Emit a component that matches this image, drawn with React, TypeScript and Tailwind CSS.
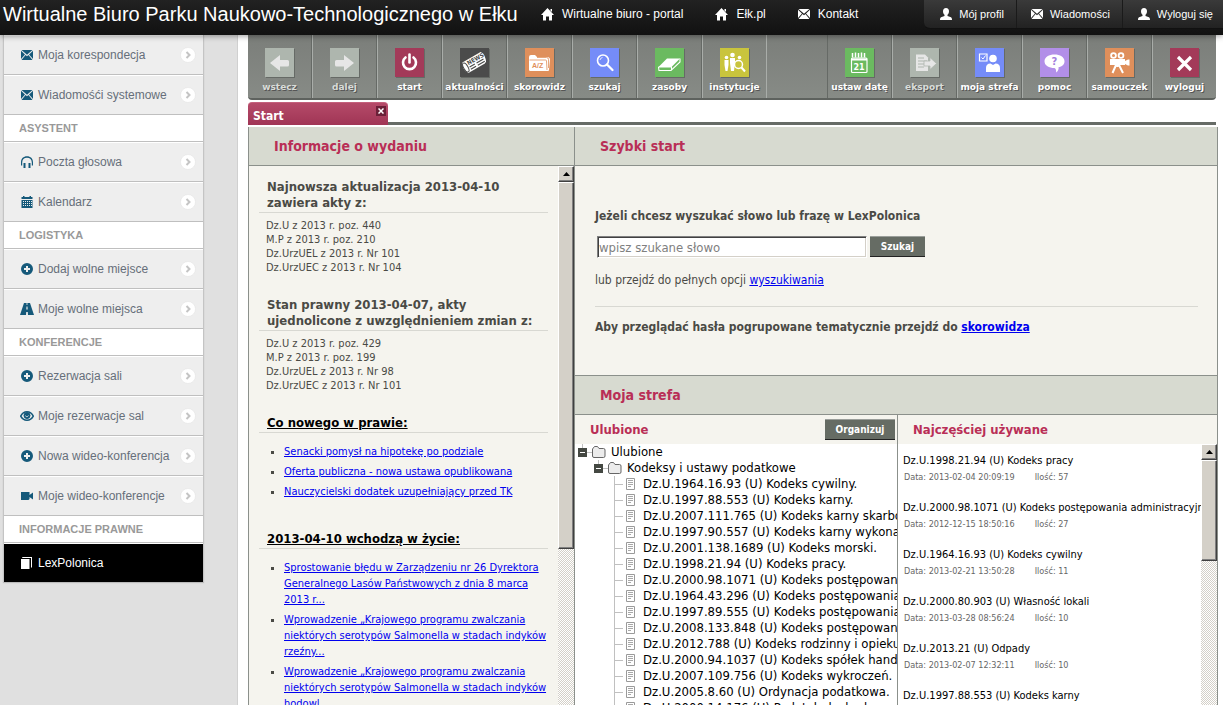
import type { ReactNode } from "react";

type IconProps = { className?: string };

function HomeIcon({ className }: IconProps) {
  return (
    <svg viewBox="0 0 13 13" className={className} fill="currentColor">
      <path d="M6.500 0 13 7H11V12.500H8V8.500H5V12.500H2V7H0L6.500 0Z" />
      <path d="M9.500 1H11V4L9.500 2.500Z" />
    </svg>
  );
}

function MailIcon({ className }: IconProps) {
  return (
    <svg viewBox="0 0 12 10" className={className} fill="currentColor">
      <path d="M.5 0H11.500L6 4.800Z" />
      <path d="M0 .8 4 4.500 0 9Z" />
      <path d="M12 .8 8 4.500 12 9Z" />
      <path d="M4.600 5.100 6 6.300 7.400 5.100 11.500 10H.5Z" />
    </svg>
  );
}

function UserIcon({ className }: IconProps) {
  return (
    <svg viewBox="0 0 12 12" className={className} fill="currentColor">
      <path d="M6 0C8 0 9 1.400 9 3.200C9 4.900 8.200 6 7.500 6.700V8L11 9.300C11.700 9.700 12 10.500 12 12H0C0 10.500.3 9.700 1 9.300L4.500 8V6.700C3.800 6 3 4.900 3 3.200C3 1.400 4 0 6 0Z" />
    </svg>
  );
}

function HeadphonesIcon({ className }: IconProps) {
  return (
    <svg viewBox="0 0 12 12" className={className} fill="currentColor">
      <path d="M0 9.500V6.500C0 2.500 2.500 .3 6 .3S12 2.500 12 6.500V9.500H10.800V6.500C10.800 3.400 9 1.700 6 1.700S1.200 3.400 1.200 6.500V9.500Z" />
      <path d="M2.500 7H4.500V12H2.500ZM7.500 7H9.500V12H7.500Z" />
    </svg>
  );
}

function CalendarIcon({ className }: IconProps) {
  return (
    <svg viewBox="0 0 12 12" className={className} fill="currentColor">
      <path d="M.5 1H2V0H3.500V1H8.500V0H10V1H11.500V3H.5Z" />
      <path
        fillRule="evenodd"
        d="M.5 4H11.500V12H.5ZM2 5V6H3V5ZM4 5V6H5V5ZM6 5V6H7V5ZM8 5V6H9V5ZM10 5V6H11V5ZM2 7V8H3V7ZM4 7V8H5V7ZM6 7V8H7V7ZM8 7V8H9V7ZM10 7V8H11V7ZM2 9V10H3V9ZM4 9V10H5V9ZM6 9V10H7V9ZM8 9V10H9V9ZM10 9V10H11V9Z"
      />
    </svg>
  );
}

function PlusIcon({ className }: IconProps) {
  return (
    <svg viewBox="0 0 12 12" className={className} fill="currentColor">
      <path
        fillRule="evenodd"
        d="M6 0A6 6 0 1 1 6 12A6 6 0 1 1 6 0ZM5 3V5H3V7H5V9H7V7H9V5H7V3Z"
      />
    </svg>
  );
}

function RoadIcon({ className }: IconProps) {
  return (
    <svg viewBox="0 0 14 12" className={className} fill="currentColor">
      <path
        fillRule="evenodd"
        d="M4 0H10L14 12H8L7.800 9H6.200L6 12H0ZM6.600 0V2H7.400V0ZM6.500 3.500 6.300 6.500H7.700L7.500 3.500Z"
      />
    </svg>
  );
}

function EyeIcon({ className }: IconProps) {
  return (
    <svg viewBox="0 0 14 10" className={className} fill="none" stroke="currentColor">
      <path d="M.7 5.200C3.500-.6 10.500-.6 13.300 5.200C10.500 10.600 3.500 10.600.7 5.200Z" strokeWidth="1.500" />
      <circle cx="7" cy="4.500" r="3" fill="currentColor" />
      <path d="M5.500 4.500C5.500 6 8 6 8.500 4.500" stroke="#eee" strokeWidth=".8" />
    </svg>
  );
}

function VideoIcon({ className }: IconProps) {
  return (
    <svg viewBox="0 0 12 8" className={className} fill="currentColor">
      <path d="M0 0H8.500V3L12 .5V7.500L8.500 5V7L7.500 8H0Z" />
    </svg>
  );
}

function BookIcon({ className }: IconProps) {
  return (
    <svg viewBox="0 0 11 12" className={className} fill="currentColor">
      <path d="M0 2H8.500V12H0Z" />
      <path d="M1.500 0H11V10.500H10V1H1Z" />
    </svg>
  );
}

type MenuItem = { label: string; icon: ReactNode; active?: boolean };

const iconSize = "h-3 w-3";

const menu: { title?: string; items: MenuItem[] }[] = [
  {
    items: [
      { label: "Moja korespondecja", icon: <MailIcon className="h-[10px] w-3" /> },
      { label: "Wiadomośći systemowe", icon: <MailIcon className="h-[10px] w-3" /> },
    ],
  },
  {
    title: "ASYSTENT",
    items: [
      { label: "Poczta głosowa", icon: <HeadphonesIcon className={iconSize} /> },
      { label: "Kalendarz", icon: <CalendarIcon className={iconSize} /> },
    ],
  },
  {
    title: "LOGISTYKA",
    items: [
      { label: "Dodaj wolne miejsce", icon: <PlusIcon className={iconSize} /> },
      { label: "Moje wolne miejsca", icon: <RoadIcon className="h-3 w-[14px]" /> },
    ],
  },
  {
    title: "KONFERENCJE",
    items: [
      { label: "Rezerwacja sali", icon: <PlusIcon className={iconSize} /> },
      { label: "Moje rezerwacje sal", icon: <EyeIcon className="h-[10px] w-[14px]" /> },
      { label: "Nowa wideo-konferencja", icon: <PlusIcon className={iconSize} /> },
      { label: "Moje wideo-konferencje", icon: <VideoIcon className="h-2 w-3" /> },
    ],
  },
  {
    title: "INFORMACJE PRAWNE",
    items: [{ label: "LexPolonica", icon: <BookIcon className="h-3 w-[11px]" />, active: true }],
  },
];

type Tool = { label: string; bg: string; drawing: ReactNode; dim?: boolean };

const mainTools: Tool[] = [
  {
    label: "wstecz",
    bg: "bg-[#aeb6ae]",
    dim: true,
    drawing: <path d="M5 15 15 7V12H22.500Q24 12 24 13.500V17Q24 18.500 22.500 18.500H15V23Z" fill="#e6e6e6" />,
  },
  {
    label: "dalej",
    bg: "bg-[#aeb6ae]",
    dim: true,
    drawing: <path d="M24 15 14 7V12H6.500Q5 12 5 13.500V17Q5 18.500 6.500 18.500H14V23Z" fill="#e6e6e6" />,
  },
  {
    label: "start",
    bg: "bg-[#a33a59]",
    drawing: (
      <g fill="none" stroke="#fff" strokeLinecap="round" strokeWidth="2.600">
        <path d="M10.500 9.500A6.500 6.500 0 1 0 18.500 9.500" />
        <path d="M14.500 6.500V14.500" />
      </g>
    ),
  },
  {
    label: "aktualności",
    bg: "bg-[#4b4b4b]",
    drawing: (
      <g transform="rotate(-30 14.500 14.500)">
        <path d="M4 8.500H25Q27 11 26.500 14T25 19.500L23 20.500H4Q1.500 17.500 2 14T4 8.500Z" fill="#fff" />
        <ellipse cx="4.500" cy="14.500" rx="2.200" ry="5" fill="none" stroke="#4b4b4b" />
        <text x="8" y="14" fontSize="6" fontWeight="bold" fontFamily="DejaVu Sans Condensed" fill="#4b4b4b">NEWS</text>
        <path d="M8 16H14M8 18.500H14M16 16H24M16 18.500H24" stroke="#4b4b4b" strokeWidth="1.200" />
      </g>
    ),
  },
  {
    label: "skorowidz",
    bg: "bg-[#df8f5b]",
    drawing: (
      <>
        <path d="M4 22V9Q4 7 6 7H10L12 9H22Q25 9 25 11.500L24 22Q24 23 23 23H5.500Q4 23 4 22Z" fill="#fff" />
        <path d="M4.500 12H20.500Q21.500 12 21.500 13L22 22M12 9.500H21.500Q23.500 9.500 23.500 11.500V20" fill="none" stroke="#df8f5b" strokeWidth=".8" />
        <text x="7" y="20" fontSize="7" fontWeight="bold" fontFamily="Liberation Sans" fill="#df8f5b">A/Z</text>
      </>
    ),
  },
  {
    label: "szukaj",
    bg: "bg-[#758cf8]",
    drawing: (
      <g fill="none" stroke="#fff">
        <circle cx="13" cy="12.500" r="5.500" strokeWidth="1.600" />
        <path d="M17 16.500 22.500 22" strokeWidth="2.300" strokeLinecap="round" />
        <path d="M10 12A3 3 0 0 1 12.500 9.500" strokeWidth=".8" />
      </g>
    ),
  },
  {
    label: "zasoby",
    bg: "bg-[#6bba60]",
    drawing: (
      <>
        <path d="M12 10.500H25L16.500 19H3.500Z" fill="#fff" />
        <path d="M3.500 19 4 22.500H16L25 14V10.500M3.500 19H16.500V22" fill="none" stroke="#fff" strokeWidth="1.100" />
      </>
    ),
  },
  {
    label: "instytucje",
    bg: "bg-[#c9c43d]",
    drawing: (
      <>
        <g fill="#fff">
          <circle cx="6.500" cy="9.500" r="1.800" />
          <path d="M4.500 12H8.500V17L7.500 23H5.500L4.500 17Z" />
          <circle cx="12.500" cy="7" r="2.300" />
          <path d="M10 10H15V14L14 23H11L10 15Z" />
          <circle cx="19.500" cy="9.500" r="1.800" />
        </g>
        <circle cx="18.500" cy="16.500" r="4" fill="#c9c43d" stroke="#fff" strokeWidth="1.500" />
        <path d="M21.500 19.500 25 23.500" stroke="#fff" strokeWidth="2" />
      </>
    ),
  },
];

const sideTools: Tool[] = [
  {
    label: "ustaw datę",
    bg: "bg-[#6bba60]",
    drawing: (
      <>
        <rect x="6.500" y="10" width="15.500" height="14.500" rx="1" fill="none" stroke="#fff" strokeWidth="1.200" />
        <path d="M7.500 5V9.500M10.500 4.500V9.500M13.500 5V9.500M16.500 4.500V9.500M19.500 5V9.500" stroke="#fff" strokeWidth="1.500" />
        <path d="M6.500 11.500H22" stroke="#fff" strokeWidth="2" />
        <text x="8.500" y="21.500" fontSize="8" fontWeight="bold" fontFamily="DejaVu Sans" fill="#fff">21</text>
      </>
    ),
  },
  {
    label: "eksport",
    bg: "bg-[#aeb6ae]",
    dim: true,
    drawing: (
      <>
        <path d="M6 6.500H15L18 9.500V23H6Z" fill="#e6e6e6" />
        <path d="M8 10H14M8 13H17M8 16H17M8 19H14" stroke="#aeb6ae" strokeWidth="1.200" />
        <path d="M14 13H20V9.500L26.500 15.500 20 21.500V18H14Z" fill="#e6e6e6" stroke="#aeb6ae" strokeWidth=".8" />
      </>
    ),
  },
  {
    label: "moja strefa",
    bg: "bg-[#758cf8]",
    drawing: (
      <>
        <path d="M4.500 6H12V13H4.500Z" fill="none" stroke="#fff" strokeWidth="1.200" />
        <path d="M6.500 9.500 8 11 10.500 7.500" fill="none" stroke="#fff" />
        <circle cx="18" cy="10.500" r="3.800" fill="#fff" />
        <path d="M11 24V20Q11 15.500 15.500 15.500L18 17 20.500 15.500Q25 15.500 25 20V24Z" fill="#fff" />
      </>
    ),
  },
  {
    label: "pomoc",
    bg: "bg-[#b28fe8]",
    drawing: (
      <>
        <path d="M14.500 6.500C20 6.500 24.500 9 24.500 13.200C24.500 16.500 22 18.500 18.500 19.300C19 21 18 23.500 16 24.500C16.500 22.500 16 21 14.500 20C9 20 4.500 17.500 4.500 13.200C4.500 9 9 6.500 14.500 6.500Z" fill="#fff" />
        <text x="11.500" y="17" fontSize="10" fontWeight="bold" fontFamily="DejaVu Sans" fill="#a47fdc">?</text>
      </>
    ),
  },
  {
    label: "samouczek",
    bg: "bg-[#df8f5b]",
    drawing: (
      <>
        <g fill="none" stroke="#fff" strokeWidth="1.800">
          <circle cx="8.500" cy="7.500" r="2.400" />
          <circle cx="16" cy="7.500" r="2.400" />
        </g>
        <path d="M5 11H20V17H5ZM20 13 23 11.500H24.500V17.500H23L20 16Z" fill="#fff" />
        <path d="M11 17 7.500 25M14 17 18 25M12.500 16V19" stroke="#fff" strokeWidth="2" />
      </>
    ),
  },
  {
    label: "wyloguj",
    bg: "bg-[#a33a59]",
    drawing: <path d="M8 9 21 22M21 9 8 22" stroke="#fff" strokeWidth="3.200" />,
  },
];

const favourites = [
  "Dz.U.1964.16.93 (U) Kodeks cywilny.",
  "Dz.U.1997.88.553 (U) Kodeks karny.",
  "Dz.U.2007.111.765 (U) Kodeks karny skarbow",
  "Dz.U.1997.90.557 (U) Kodeks karny wykonaw",
  "Dz.U.2001.138.1689 (U) Kodeks morski.",
  "Dz.U.1998.21.94 (U) Kodeks pracy.",
  "Dz.U.2000.98.1071 (U) Kodeks postępowania",
  "Dz.U.1964.43.296 (U) Kodeks postępowania",
  "Dz.U.1997.89.555 (U) Kodeks postępowania",
  "Dz.U.2008.133.848 (U) Kodeks postępowania",
  "Dz.U.2012.788 (U) Kodeks rodzinny i opiekuń",
  "Dz.U.2000.94.1037 (U) Kodeks spółek handlo",
  "Dz.U.2007.109.756 (U) Kodeks wykroczeń.",
  "Dz.U.2005.8.60 (U) Ordynacja podatkowa.",
  "Dz.U.2000.14.176 (U) Podatek dochodowy.",
];

const mostUsed = [
  { name: "Dz.U.1998.21.94 (U) Kodeks pracy", date: "2013-02-04 20:09:19", count: 57 },
  { name: "Dz.U.2000.98.1071 (U) Kodeks postępowania administracyjneg", date: "2012-12-15 18:50:16", count: 27 },
  { name: "Dz.U.1964.16.93 (U) Kodeks cywilny", date: "2013-02-21 13:50:28", count: 11 },
  { name: "Dz.U.2000.80.903 (U) Własność lokali", date: "2013-03-28 08:56:24", count: 10 },
  { name: "Dz.U.2013.21 (U) Odpady", date: "2013-02-07 12:32:11", count: 10 },
  { name: "Dz.U.1997.88.553 (U) Kodeks karny", date: "2013-01-18 09:14:52", count: 9 },
];

const news = [
  "Senacki pomysł na hipotekę po podziale",
  "Oferta publiczna - nowa ustawa opublikowana",
  "Nauczycielski dodatek uzupełniający przed TK",
];

const comingIntoForce = [
  "Sprostowanie błędu w Zarządzeniu nr 26 Dyrektora Generalnego Lasów Państwowych z dnia 8 marca 2013 r...",
  "Wprowadzenie „Krajowego programu zwalczania niektórych serotypów Salmonella w stadach indyków rzeźny...",
  "Wprowadzenie „Krajowego programu zwalczania niektórych serotypów Salmonella w stadach indyków hodowl...",
];

function TopBar() {
  return (
    <header className="z-10 flex h-[35px] shrink-0 items-start justify-between bg-linear-to-b from-[#222] to-[#111] text-white shadow-[0_1px_6px_rgba(0,0,0,0.4)]">
      <div className="flex items-center">
        <h1 className="w-[541px] pl-[3px] text-[20px] leading-7 whitespace-nowrap">
          Wirtualne Biuro Parku Naukowo-Technologicznego w Ełku
        </h1>
        <nav className="flex items-center gap-8 text-xs">
          <a href="#portal" className="flex items-center gap-2">
            <HomeIcon className="h-[13px] w-[13px]" />
            Wirtualne biuro - portal
          </a>
          <a href="#elk" className="flex items-center gap-2">
            <HomeIcon className="h-[13px] w-[13px]" />
            Ełk.pl
          </a>
          <a href="#kontakt" className="flex items-center gap-2">
            <MailIcon className="h-[10px] w-3" />
            Kontakt
          </a>
        </nav>
      </div>
      <nav className="flex h-[29px] rounded-bl-md border-b border-[#111] bg-linear-to-b from-[#3a3a3a] to-[#222] text-[11px]">
        <a href="#profil" className="flex items-center gap-[7px] border-r border-[#1a1a1a] pr-3 pl-4">
          <UserIcon className="h-3 w-3" />
          Mój profil
        </a>
        <a href="#wiadomosci" className="flex items-center gap-[7px] border-r border-[#1a1a1a] pr-3 pl-[14px]">
          <MailIcon className="h-[10px] w-3" />
          Wiadomości
        </a>
        <a href="#wyloguj" className="flex items-center gap-[7px] pr-[10px] pl-[15px]">
          <UserIcon className="h-3 w-3" />
          Wyloguj się
        </a>
      </nav>
    </header>
  );
}

function SideMenu() {
  return (
    <aside className="w-[238px] shrink-0 border-r border-[#d0d0d0] bg-[#e0e0e0] pl-[3px]">
      <nav className="w-[201px] border-x border-[#c4c4c4] bg-white text-xs shadow-[0_1px_1px_#bbb]">
        {menu.map((group) => (
          <div key={group.items[0].label}>
            {group.title && (
              <h2 className="h-[27px] border-b border-[#bfbfbf] pl-[15px] text-[11px] leading-[26px] font-bold text-[#999]">
                {group.title}
              </h2>
            )}
            {group.items.map((item) =>
              item.active ? (
                <a key={item.label} href="#lex" className="mt-px flex h-[38px] items-center bg-black pl-[15px] text-white">
                  <span className="mr-1 flex w-[15px] justify-center">{item.icon}</span>
                  {item.label}
                </a>
              ) : (
                <a
                  key={item.label}
                  href="#menu"
                  className="flex h-10 items-center border-t border-b border-t-white border-b-[#bfbfbf] bg-[#eee] pr-[7px] pl-[15px] text-[#666f7a]"
                >
                  <span className="mr-1 flex w-[15px] justify-center text-[#15597a]">{item.icon}</span>
                  <span className="flex-1 whitespace-nowrap">{item.label}</span>
                  <svg viewBox="0 0 16 16" className="h-4 w-4">
                    <circle cx="8" cy="8" r="7.500" fill="#fff" stroke="#e4e4e4" strokeWidth=".6" />
                    <path d="M6.500 5 9.500 8 6.500 11" fill="none" stroke="#c4c4c4" strokeWidth="2" />
                  </svg>
                </a>
              ),
            )}
          </div>
        ))}
      </nav>
    </aside>
  );
}

function ToolButton({ tool }: { tool: Tool }) {
  return (
    <button
      type="button"
      className={`flex w-[65px] shrink-0 flex-col items-center gap-1 border-r border-l border-r-[#666a66] border-l-[#a9ada9] pt-[13px] font-['DejaVu_Sans',Verdana,sans-serif] text-[9px] leading-3 font-bold whitespace-nowrap [text-shadow:1px_1px_0_#555] first:w-16 first:border-l-0 last:w-16 last:border-r-0 ${tool.dim ? "text-[#d8dcd8]" : "text-white"}`}
    >
      <svg viewBox="0 0 29 29" className={`h-[29px] w-[29px] shadow-[1px_1px_0_#666a66] [text-shadow:none] ${tool.bg}`}>
        {tool.drawing}
      </svg>
      {tool.label}
    </button>
  );
}

function Toolbar() {
  return (
    <div className="mr-[2px] flex h-[65px] shrink-0 overflow-hidden rounded-b-[4px] border-b-2 border-[#5e625e] bg-linear-to-b from-[#7b7e7a] to-[#878b86]">
      <div className="flex">
        {mainTools.map((tool) => (
          <ToolButton key={tool.label} tool={tool} />
        ))}
      </div>
      <div className="flex-1 border-l border-[#a9ada9]" />
      <div className="flex border-l border-[#666a66]">
        {sideTools.map((tool) => (
          <ToolButton key={tool.label} tool={tool} />
        ))}
      </div>
    </div>
  );
}

function ScrollBar({ thumb }: { thumb: string }) {
  return (
    <div className="flex w-4 shrink-0 flex-col bg-[repeating-conic-gradient(#d4d0c8_0_25%,#fff_0_50%)] bg-size-[2px_2px]">
      <div className="flex h-4 items-center justify-center border border-t-white border-r-[#404040] border-b-[#404040] border-l-white bg-[#d4d0c8] shadow-[inset_-1px_-1px_0_#808080]">
        <svg viewBox="0 0 7 4" className="h-1 w-[7px]">
          <path d="M3.500 0 7 4H0Z" />
        </svg>
      </div>
      <div
        className={`border border-t-white border-r-[#404040] border-b-[#404040] border-l-white bg-[#d4d0c8] shadow-[inset_-1px_-1px_0_#808080] ${thumb}`}
      />
    </div>
  );
}

function PanelTitle({ children }: { children: ReactNode }) {
  return (
    <h2 className="h-[39px] shrink-0 border-b border-[#8b908b] bg-[#d7dad0] pl-[25px] text-[14px] leading-[38px] font-bold text-[#b92e56]">
      {children}
    </h2>
  );
}

function ActTotals({ title, acts }: { title: string; acts: string[] }) {
  return (
    <section className="mb-[22px]">
      <h3 className="border-b border-[#d8d8d2] pb-px pl-2 text-[13px] leading-4 font-bold">{title}</h3>
      <ul className="pt-[6px] pl-[7px] text-[11px] leading-[14px]">
        {acts.map((act) => (
          <li key={act}>{act}</li>
        ))}
      </ul>
    </section>
  );
}

function LinkList({ title, links }: { title: string; links: string[] }) {
  return (
    <section className="mb-[31px]">
      <h3 className="border-b border-[#d8d8d2] pb-px pl-2 text-[13px] leading-4 font-bold">
        <a href="#dzial" className="text-black underline">
          {title}
        </a>
      </h3>
      <ul className="flex list-[square] flex-col gap-1 pt-[11px] pl-[25px] text-[11px] leading-4">
        {links.map((link) => (
          <li key={link}>
            <a href="#akt" className="text-[#0000ee] underline">
              {link}
            </a>
          </li>
        ))}
      </ul>
    </section>
  );
}

function ReleaseInfo() {
  return (
    <div className="flex w-[327px] shrink-0 flex-col border-r border-l border-[#8b908b]">
      <PanelTitle>Informacje o wydaniu</PanelTitle>
      <div className="flex min-h-0 flex-1">
        <div className="flex-1 overflow-hidden pt-[13px] pr-[10px] pl-[10px]">
          <ActTotals
            title="Najnowsza aktualizacja 2013-04-10 zawiera akty z:"
            acts={["Dz.U z 2013 r. poz. 440", "M.P z 2013 r. poz. 210", "Dz.UrzUEL z 2013 r. Nr 101", "Dz.UrzUEC z 2013 r. Nr 104"]}
          />
          <ActTotals
            title="Stan prawny 2013-04-07, akty ujednolicone z uwzględnieniem zmian z:"
            acts={["Dz.U z 2013 r. poz. 429", "M.P z 2013 r. poz. 199", "Dz.UrzUEL z 2013 r. Nr 98", "Dz.UrzUEC z 2013 r. Nr 101"]}
          />
          <LinkList title="Co nowego w prawie:" links={news} />
          <LinkList title="2013-04-10 wchodzą w życie:" links={comingIntoForce} />
        </div>
        <ScrollBar thumb="h-[367px]" />
      </div>
    </div>
  );
}

function QuickStart() {
  return (
    <section className="h-[249px] shrink-0 border-b border-[#8b908b]">
      <PanelTitle>Szybki start</PanelTitle>
      <form className="pt-[42px] pr-[19px] pl-5 text-[12px]" onSubmit={(e) => e.preventDefault()}>
        <label htmlFor="fraza" className="block leading-4 font-bold">
          Jeżeli chcesz wyszukać słowo lub frazę w LexPolonica
        </label>
        <div className="mt-3 flex gap-[3px] pl-[2px]">
          <input
            id="fraza"
            type="text"
            placeholder="wpisz szukane słowo"
            className="h-[22px] w-[270px] border border-t-[#808080] border-r-white border-b-white border-l-[#808080] bg-white pl-px text-[13px] shadow-[inset_1px_1px_0_#404040,inset_-1px_-1px_0_#d4d0c8] outline-none placeholder:text-[#808080]"
          />
          <button
            type="submit"
            className="h-[21px] w-[55px] border-t border-b border-t-[#9a9e9a] border-b-[#222] bg-[#666c64] text-[10px] font-bold text-white"
          >
            Szukaj
          </button>
        </div>
        <p className="mt-[14px] leading-4">
          lub przejdź do pełnych opcji{" "}
          <a href="#wyszukiwanie" className="text-[#0000ee] underline">
            wyszukiwania
          </a>
        </p>
        <p className="mt-[18px] border-t border-[#d8d8d2] pt-3 leading-4 font-bold">
          Aby przeglądać hasła pogrupowane tematycznie przejdź do{" "}
          <a href="#skorowidz" className="text-[#0000ee] underline">
            skorowidza
          </a>
        </p>
      </form>
    </section>
  );
}

function Folder({ children }: { children: ReactNode }) {
  return (
    <div className="flex h-4 items-center whitespace-nowrap">
      <svg viewBox="0 0 28 16" className="mr-[5px] h-4 w-7">
        <path d="M4.500 0V4M9 8.500H14" stroke="#c0c0c0" />
        <path d="M0 4H9V13H0Z" fill="#444842" />
        <path d="M2 8.500H7" stroke="#fff" />
        <path d="M14.500 5V12Q14.500 13.500 16 13.500H25.500Q27 13.500 27 12V6Q27 4.500 25.500 4.500H21L19.500 2.500H16.500L14.500 5" fill="#ececec" stroke="#666" />
      </svg>
      {children}
    </div>
  );
}

function Favourites() {
  return (
    <section className="flex min-w-0 flex-col border-r border-[#8b908b]">
      <div className="flex h-[29px] shrink-0 items-center justify-between pr-[2px] pl-[15px]">
        <h3 className="text-[13px] font-bold text-[#b92e56]">Ulubione</h3>
        <button
          type="button"
          className="h-[21px] w-[70px] border-t border-b border-t-[#9a9e9a] border-b-[#222] bg-[#666c64] text-[10px] font-bold text-white"
        >
          Organizuj
        </button>
      </div>
      <div className="flex-1 overflow-hidden bg-white pl-[3px] text-[13px] text-black">
        <Folder>Ulubione</Folder>
        <div className="pl-4">
          <Folder>Kodeksy i ustawy podatkowe</Folder>
          <ul className="ml-5 border-l border-[#c0c0c0]">
            {favourites.map((act) => (
              <li key={act} className="flex h-4 items-center whitespace-nowrap">
                <svg viewBox="0 0 20 16" className="mr-2 h-4 w-5 shrink-0">
                  <path d="M0 8.500H8" stroke="#c0c0c0" />
                  <path d="M11.500 2.500H19.500V13.500H11.500Z" fill="#fff" stroke="#9a9a9a" />
                  <path d="M13 4.500H18M13 6.500H18M13 8.500H18M13 10.500H16" stroke="#a8a8a8" />
                </svg>
                {act}
              </li>
            ))}
          </ul>
        </div>
      </div>
    </section>
  );
}

function MostUsed() {
  return (
    <section className="flex min-w-0 flex-col">
      <h3 className="h-[29px] shrink-0 pl-[15px] text-[13px] leading-[29px] font-bold text-[#b92e56]">
        Najczęściej używane
      </h3>
      <div className="flex min-h-0 flex-1 bg-white">
        <ul className="min-w-0 flex-1 overflow-hidden pt-[9px] pl-[5px] whitespace-nowrap">
          {mostUsed.map((act) => (
            <li key={act.name} className="h-[47px]">
              <p className="text-[11px] leading-4 text-black">{act.name}</p>
              <p className="pl-px text-[9px] leading-4 text-[#666]">
                <span className="mr-5">Data: {act.date}</span>
                <span>Ilość: {act.count}</span>
              </p>
            </li>
          ))}
        </ul>
        <ScrollBar thumb="h-[101px]" />
      </div>
    </section>
  );
}

export default function App() {
  return (
    <div className="flex h-screen flex-col overflow-hidden font-['Liberation_Sans',Arial,sans-serif]">
      <TopBar />
      <div className="flex min-h-0 flex-1">
        <SideMenu />
        <main className="flex min-w-0 flex-1 flex-col bg-white pr-[5px] pl-[10px] font-['DejaVu_Sans_Condensed',Tahoma,sans-serif] text-[#4a4a45]">
          <Toolbar />
          <div className="mt-[2px] mr-[2px] flex h-[23px] shrink-0 items-end">
            <div className="flex h-[23px] w-[140px] justify-between rounded-t-[4px] border-t border-[#c4607c] bg-linear-to-b from-[#b54a69] to-[#a03555] pl-[5px] text-[12px] leading-[26px] font-bold text-white">
              Start
              <button type="button" aria-label="Zamknij" className="mt-[3px] mr-[2px] flex h-[10px] w-[10px] items-center justify-center bg-[#6b2038]">
                <svg viewBox="0 0 6 6" className="h-[6px] w-[6px]">
                  <path d="M.5.5 5.500 5.500M5.500.5.5 5.500" stroke="#fff" strokeWidth="1.500" />
                </svg>
              </button>
            </div>
            <div className="h-[3px] flex-1 bg-[#666b66]" />
          </div>
          <div className="mt-[2px] flex min-h-0 flex-1 bg-[#f5f4ee]">
            <ReleaseInfo />
            <div className="flex min-w-0 flex-1 flex-col border-r border-[#8b908b]">
              <QuickStart />
              <PanelTitle>Moja strefa</PanelTitle>
              <div className="grid min-h-0 flex-1 grid-cols-[323px_1fr]">
                <Favourites />
                <MostUsed />
              </div>
            </div>
          </div>
        </main>
      </div>
    </div>
  );
}
